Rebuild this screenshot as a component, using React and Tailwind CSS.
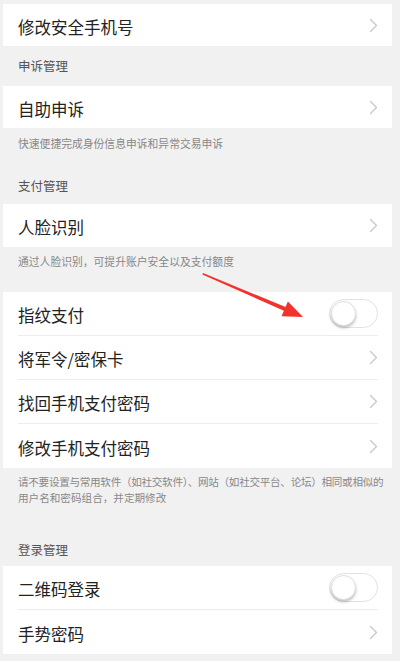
import React from "react";

const Chevron = () => (
  <svg width="9" height="15" viewBox="0 0 9 15" fill="none" className="shrink-0">
    <path d="M1.5 1.5 L7.5 7.5 L1.5 13.5" stroke="#c8c8cc" strokeWidth="1.4" strokeLinecap="round" strokeLinejoin="round" />
  </svg>
);

const Toggle = () => (
  <div className="relative w-[49px] h-[29px] rounded-full border border-[#e2e2e2] bg-white shrink-0">
    <div className="absolute left-[1px] top-[1px] w-[25px] h-[25px] rounded-full bg-white border border-[#e0e0e0] shadow-[0_2px_3px_rgba(0,0,0,0.25)]" />
  </div>
);

const Row = ({ label, toggle, last, h = "h-[44px]" }) => (
  <div className="pl-[15px] pr-[14px]">
    <div
      className={`${h} flex items-center justify-between ${
        last ? "" : "border-b border-[#ececec]"
      }`}
    >
      <span className="pt-[4px] text-[16.5px] text-[#222]">{label}</span>
      {toggle ? <Toggle /> : <Chevron />}
    </div>
  </div>
);

const Group = ({ children }) => (
  <div className="bg-white ml-[3px] mr-[8px]">{children}</div>
);

const Header = ({ children }) => (
  <div className="pl-[18px] text-[12.5px] leading-[16px] text-[#555]">{children}</div>
);

const Note = ({ children, className = "text-[10.8px] leading-[12.5px]" }) => (
  <div className={`pl-[18px] text-[#888] whitespace-nowrap ${className}`}>
    {children}
  </div>
);

export default function App() {
  return (
    <div
      className="relative w-[400px] h-[661px] overflow-hidden bg-[#f1f1f1] pt-[4px]"
      style={{ fontFamily: '"Noto Sans CJK SC", "Noto Sans", sans-serif' }}
    >
      <Group>
        <Row label="修改安全手机号" last h="h-[42px]" />
      </Group>
      <div className="h-[40px] flex flex-col justify-center">
        <Header>申诉管理</Header>
      </div>
      <Group>
        <Row label="自助申诉" last h="h-[42px]" />
      </Group>
      <div className="h-[76px] flex flex-col pt-[9px] gap-[28px]">
        <Note>快速便捷完成身份信息申诉和异常交易申诉</Note>
        <Header>支付管理</Header>
      </div>
      <Group>
        <Row label="人脸识别" last h="h-[43px]" />
      </Group>
      <div className="h-[45px] pt-[8px]">
        <Note>通过人脸识别，可提升账户安全以及支付额度</Note>
      </div>
      <Group>
        <Row label="指纹支付" toggle />
        <Row label="将军令/密保卡" />
        <Row label="找回手机支付密码" />
        <Row label="修改手机支付密码" last />
      </Group>
      <div className="h-[98px] flex flex-col pt-[6px]">
        <Note className="text-[10.6px] leading-[15.5px]">
          <span className="tracking-[-0.3px]">
            请不要设置与常用软件（如社交软件）、网站（如社交平台、论坛）相同或相似的
          </span>
          <br />
          用户名和密码组合，并定期修改
        </Note>
        <div className="mt-[37px]">
          <Header>登录管理</Header>
        </div>
      </div>
      <Group>
        <Row label="二维码登录" toggle />
        <Row label="手势密码" last />
      </Group>

      {/* red annotation arrow */}
      <svg className="absolute left-0 top-0 pointer-events-none" width="400" height="661">
        <polygon
          points="203,273 285.5,307.1 287.9,301.6 303,317 281.5,316.2 283.9,310.7 202.4,274.4"
          fill="#f2322d"
        />
      </svg>
    </div>
  );
}
